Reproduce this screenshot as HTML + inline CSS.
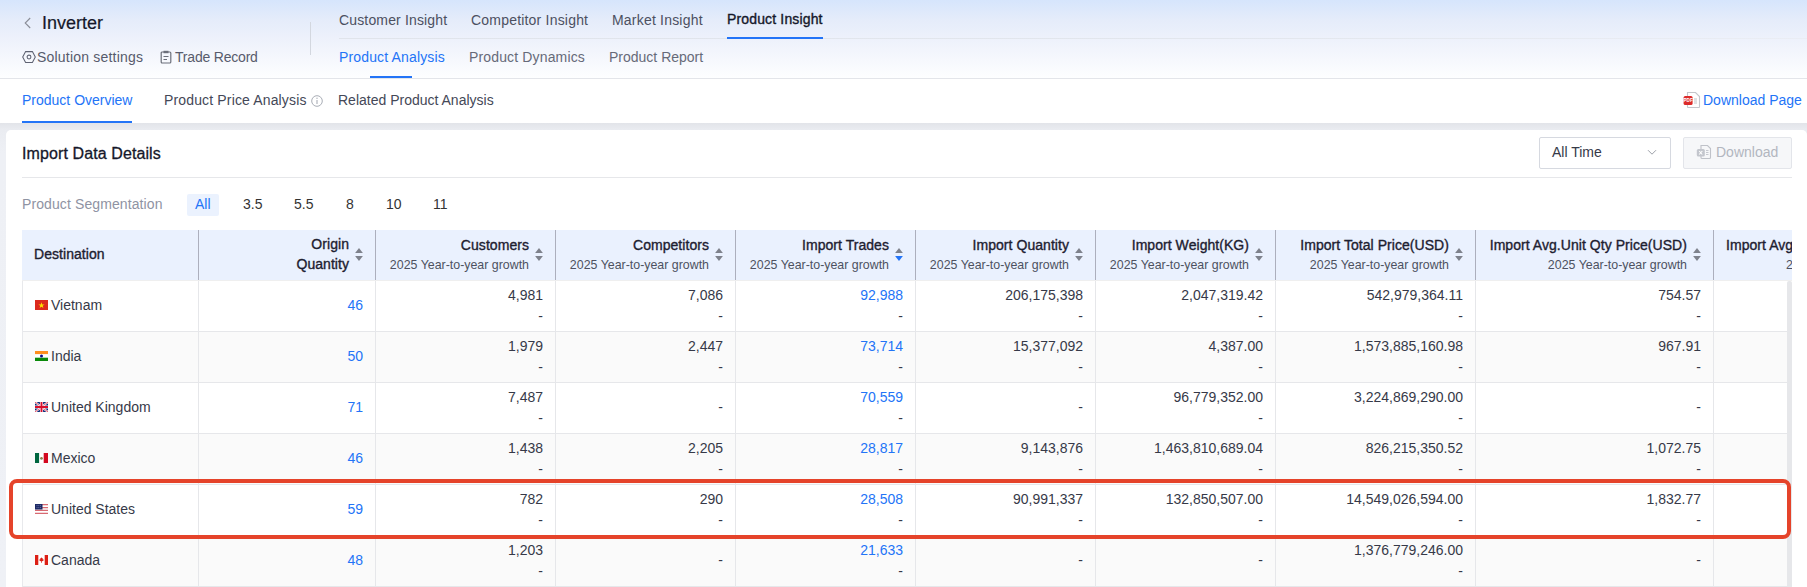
<!DOCTYPE html>
<html><head><meta charset="utf-8">
<style>
*{box-sizing:border-box;margin:0;padding:0}
html,body{width:1807px;height:587px;overflow:hidden;background:#fff;font-family:"Liberation Sans",sans-serif;font-size:14px;color:#333}
.a{position:absolute;white-space:nowrap;line-height:1}
#hdr{position:absolute;left:0;top:0;width:1807px;height:79px;background:linear-gradient(180deg,#d6e5fc 0px,#e5ecfa 20px,#edf1fb 38px,#f6f8fd 60px,#fdfeff 78px);border-bottom:1px solid #e3e5ea}
.blue{color:#2374f7 !important}
.gray{color:#575b6c}
.gn{color:#4c5061}
.gs{color:#666a79}
#tabs{position:absolute;left:0;top:79px;width:1807px;height:44px;background:#fff}
#band{position:absolute;left:0;top:123px;width:1807px;height:464px;background:linear-gradient(180deg,#e2e4e9 0,#eaecf1 7px,#eef0f5 30px,#eff1f6 100%)}
#card{position:absolute;left:6px;top:130px;width:1801px;height:470px;background:#fff;border-radius:5px}
.th{position:absolute;overflow:hidden;top:230px;height:50px;background:#eaf1fe;border-left:1px solid #acafbd}
.tt{position:absolute;right:26px;top:5px;font-weight:400;-webkit-text-stroke:0.35px #1d2030;color:#1d2030;font-size:14px;letter-spacing:0.05px;line-height:20px;text-align:right;white-space:nowrap}
.ts{position:absolute;right:26px;top:27px;color:#4d5161;font-size:12.4px;line-height:16px;white-space:nowrap}
.sort{position:absolute;right:12.5px;top:18px;width:8px;height:13px}
.row{position:absolute;left:22px;width:1765px;height:51px;border-bottom:1px solid #e6e7ea}
.cell{position:absolute;top:0;height:51px;border-left:1px solid #e6e7ea}
.v1{position:absolute;right:12px;top:5px;line-height:18px;color:#363948;font-size:14px}
.v2{position:absolute;right:12px;top:26px;line-height:18px;color:#363948;font-size:14px}
.vc{position:absolute;right:12px;top:15px;line-height:18px;font-size:14px;color:#363948}
</style></head>
<body>
<div id="hdr"></div>
<!-- header left -->
<svg class="a" style="left:23px;top:17px" width="10" height="12" viewBox="0 0 10 12"><path d="M7.2 1 L2.2 6 L7.2 11" fill="none" stroke="#8a8d97" stroke-width="1.1"/></svg>
<div class="a" style="left:42px;top:14px;font-size:18px;color:#15182a;-webkit-text-stroke:0.2px #15182a">Inverter</div>
<svg class="a" style="left:22px;top:51px" width="14" height="12" viewBox="0 0 14 12"><path d="M3.6 0.6 H10.4 L13.3 6 L10.4 11.4 H3.6 L0.7 6 Z" fill="none" stroke="#5e6272" stroke-width="1.05"/><circle cx="7" cy="6" r="1.9" fill="none" stroke="#5e6272" stroke-width="1.05"/></svg>
<div class="a gray" style="left:37px;top:50px;font-size:14px;letter-spacing:0.2px">Solution settings</div>
<svg class="a" style="left:160px;top:50px" width="12" height="14" viewBox="0 0 12 14"><rect x="1.2" y="2" width="9.6" height="11" rx="1" fill="none" stroke="#6b6f7a" stroke-width="1.2"/><rect x="3.5" y="0.8" width="5" height="2.4" fill="#6b6f7a"/><path d="M3.5 6.5 H8.5 M3.5 9.5 H7" stroke="#6b6f7a" stroke-width="1.2"/></svg>
<div class="a gray" style="left:175px;top:50px;font-size:14px;letter-spacing:-0.2px">Trade Record</div>
<div class="a" style="left:310px;top:22px;width:1px;height:33px;background:#d3d7df"></div>
<!-- top nav -->
<div class="a gn" style="left:339px;top:13px;letter-spacing:0.15px">Customer Insight</div>
<div class="a gn" style="left:471px;top:13px;letter-spacing:0.2px">Competitor Insight</div>
<div class="a gn" style="left:612px;top:13px;letter-spacing:0.2px">Market Insight</div>
<div class="a" style="left:727px;top:12px;color:#15182a;-webkit-text-stroke:0.35px #15182a;letter-spacing:0.15px">Product Insight</div>
<div class="a" style="left:339px;top:38px;width:1468px;height:1px;background:linear-gradient(90deg,#e0e4eb 0,#e2e6ed 60%,#eaedf4 100%)"></div>
<div class="a" style="left:727px;top:37px;width:96px;height:2px;background:#2374f7"></div>
<div class="a blue" style="left:339px;top:50px;letter-spacing:0.15px">Product Analysis</div>
<div class="a gs" style="left:469px;top:50px;letter-spacing:0.15px">Product Dynamics</div>
<div class="a gs" style="left:609px;top:50px">Product Report</div>
<div class="a" style="left:370px;top:76px;width:42px;height:2px;background:#2374f7"></div>

<!-- tabs -->
<div id="tabs"></div>
<div class="a blue" style="left:22px;top:93px">Product Overview</div>
<div class="a" style="left:22px;top:121px;width:110px;height:2px;background:#2374f7"></div>
<div class="a" style="left:164px;top:93px;color:#444857;letter-spacing:0.15px">Product Price Analysis</div>
<svg class="a" style="left:311px;top:95px" width="12" height="12" viewBox="0 0 12 12"><circle cx="6" cy="6" r="5.3" fill="none" stroke="#a9adb6" stroke-width="1"/><path d="M6 5 V9" stroke="#a9adb6" stroke-width="1.1"/><circle cx="6" cy="3.3" r="0.7" fill="#a9adb6"/></svg>
<div class="a" style="left:338px;top:93px;color:#444857">Related Product Analysis</div>
<svg class="a" style="left:1683px;top:91px" width="18" height="18" viewBox="0 0 18 18"><path d="M4.5 1.5 H12.5 L16.5 5.5 V16 Q16.5 16.5 16 16.5 H5 Q4.5 16.5 4.5 16 Z" fill="#fff" stroke="#c4c6cb" stroke-width="1.1"/><path d="M11 8 H14 M11 10 H14 M11 12 H14" stroke="#b9bcc2" stroke-width="0.9"/><rect x="0.6" y="5" width="9" height="9" rx="1.6" fill="#dc2b2b"/><text x="5.1" y="11.2" font-size="4.6" font-family="Liberation Sans" font-weight="700" fill="#fff" text-anchor="middle">PDF</text></svg>
<div class="a blue" style="left:1703px;top:93px">Download Page</div>

<div id="band"></div>
<div id="card"></div>

<div class="a" style="left:22px;top:146px;font-size:16px;color:#15182a;-webkit-text-stroke:0.3px #15182a;letter-spacing:0.1px">Import Data Details</div>
<div class="a" style="left:1539px;top:137px;width:132px;height:32px;border:1px solid #d6d9e0;border-radius:2px;background:#fff"></div>
<div class="a" style="left:1552px;top:145px;color:#363948">All Time</div>
<svg class="a" style="left:1647px;top:149px" width="10" height="7" viewBox="0 0 10 7"><path d="M1 1.2 L5 5.2 L9 1.2" fill="none" stroke="#9ca0a8" stroke-width="1"/></svg>
<div class="a" style="left:1683px;top:137px;width:109px;height:32px;border:1px solid #e3e5ea;border-radius:2px;background:#f6f7f9"></div>
<svg class="a" style="left:1696px;top:144px" width="16" height="16" viewBox="0 0 16 16"><path d="M5 1.5 H11.5 L14.5 4.5 V13.5 Q14.5 14.5 13.5 14.5 H6 Q5 14.5 5 13.5 Z" fill="#f6f7f9" stroke="#bfc2c9" stroke-width="1.1"/><path d="M10 6.5 H12.5 M10 8.5 H12.5 M10 10.5 H12.5" stroke="#bfc2c9" stroke-width="0.9"/><rect x="0.8" y="5" width="8" height="7.5" rx="1.5" fill="#c3c6cd"/><path d="M3.2 7 L6.3 10.5 M6.3 7 L3.2 10.5" stroke="#fff" stroke-width="1.1"/></svg>
<div class="a" style="left:1716px;top:145px;color:#b2b6bf">Download</div>
<div class="a" style="left:22px;top:177px;width:1770px;height:1px;background:#e6e7ea"></div>

<div class="a" style="left:22px;top:197px;color:#8f93a3;letter-spacing:0.1px">Product Segmentation</div>
<div class="a" style="left:187px;top:194px;width:32px;height:22px;background:#ebf2fe;border-radius:2px"></div>
<div class="a blue" style="left:195px;top:197px">All</div>
<div class="a" style="left:243px;top:197px;color:#333">3.5</div>
<div class="a" style="left:294px;top:197px;color:#333">5.5</div>
<div class="a" style="left:346px;top:197px;color:#333">8</div>
<div class="a" style="left:386px;top:197px;color:#333">10</div>
<div class="a" style="left:433px;top:197px;color:#333">11</div>

<!-- TABLE -->
<div class="th" style="left:22px;width:176px;border-left:none;"><div class="tt" style="left:12px;right:auto;top:14px;text-align:left">Destination</div></div>
<div class="th" style="left:198px;width:177px;"><div class="tt" style="top:4px;line-height:20px">Origin<br>Quantity</div><svg class="sort" viewBox="0 0 8 13"><path d="M4 0 L7.9 5.1 H0.1 Z" fill="#7e828c"/><path d="M4 13 L7.9 8 H0.1 Z" fill="#7e828c"/></svg></div>
<div class="th" style="left:375px;width:180px;"><div class="tt">Customers</div><div class="ts">2025 Year-to-year growth</div><svg class="sort" viewBox="0 0 8 13"><path d="M4 0 L7.9 5.1 H0.1 Z" fill="#7e828c"/><path d="M4 13 L7.9 8 H0.1 Z" fill="#7e828c"/></svg></div>
<div class="th" style="left:555px;width:180px;"><div class="tt">Competitors</div><div class="ts">2025 Year-to-year growth</div><svg class="sort" viewBox="0 0 8 13"><path d="M4 0 L7.9 5.1 H0.1 Z" fill="#7e828c"/><path d="M4 13 L7.9 8 H0.1 Z" fill="#7e828c"/></svg></div>
<div class="th" style="left:735px;width:180px;"><div class="tt">Import Trades</div><div class="ts">2025 Year-to-year growth</div><svg class="sort" viewBox="0 0 8 13"><path d="M4 0 L7.9 5.1 H0.1 Z" fill="#7e828c"/><path d="M4 13 L7.9 8 H0.1 Z" fill="#2374f7"/></svg></div>
<div class="th" style="left:915px;width:180px;"><div class="tt">Import Quantity</div><div class="ts">2025 Year-to-year growth</div><svg class="sort" viewBox="0 0 8 13"><path d="M4 0 L7.9 5.1 H0.1 Z" fill="#7e828c"/><path d="M4 13 L7.9 8 H0.1 Z" fill="#7e828c"/></svg></div>
<div class="th" style="left:1095px;width:180px;"><div class="tt">Import Weight(KG)</div><div class="ts">2025 Year-to-year growth</div><svg class="sort" viewBox="0 0 8 13"><path d="M4 0 L7.9 5.1 H0.1 Z" fill="#7e828c"/><path d="M4 13 L7.9 8 H0.1 Z" fill="#7e828c"/></svg></div>
<div class="th" style="left:1275px;width:200px;"><div class="tt">Import Total Price(USD)</div><div class="ts">2025 Year-to-year growth</div><svg class="sort" viewBox="0 0 8 13"><path d="M4 0 L7.9 5.1 H0.1 Z" fill="#7e828c"/><path d="M4 13 L7.9 8 H0.1 Z" fill="#7e828c"/></svg></div>
<div class="th" style="left:1475px;width:238px;"><div class="tt">Import Avg.Unit Qty Price(USD)</div><div class="ts">2025 Year-to-year growth</div><svg class="sort" viewBox="0 0 8 13"><path d="M4 0 L7.9 5.1 H0.1 Z" fill="#7e828c"/><path d="M4 13 L7.9 8 H0.1 Z" fill="#7e828c"/></svg></div>
<div class="th" style="left:1713px;width:187px;"><div class="tt" style="left:12px;right:auto">Import Avg.Unit Weight Price(USD)</div><div class="ts" style="left:72px;right:auto">2025 Year-to-year growth</div></div>
<div class="a" style="left:22px;top:280px;width:1770px;height:1px;background:#efefef"></div>
<div class="row" style="top:281px;background:#fff"><div class="a" style="left:0;top:0;width:1px;height:51px;background:#e8e9ec"></div>
<div class="cell" style="left:0px;width:176px;border-left:none;"><svg style="position:absolute;left:13px;top:19px" width="13" height="10" viewBox="0 0 13 10"><rect width="13" height="10" fill="#dc2a1e"/><path d="M6.5 2.2 L7.25 4.45 L9.6 4.45 L7.7 5.85 L8.4 8.1 L6.5 6.7 L4.6 8.1 L5.3 5.85 L3.4 4.45 L5.75 4.45 Z" fill="#fde000"/></svg><div class="a" style="left:29px;top:17px;color:#363948;font-size:14px">Vietnam</div></div>
<div class="cell" style="left:176px;width:177px;"><div class="vc blue">46</div></div>
<div class="cell" style="left:353px;width:180px;"><div class="v1">4,981</div><div class="v2">-</div></div>
<div class="cell" style="left:533px;width:180px;"><div class="v1">7,086</div><div class="v2">-</div></div>
<div class="cell" style="left:713px;width:180px;"><div class="v1 blue">92,988</div><div class="v2">-</div></div>
<div class="cell" style="left:893px;width:180px;"><div class="v1">206,175,398</div><div class="v2">-</div></div>
<div class="cell" style="left:1073px;width:180px;"><div class="v1">2,047,319.42</div><div class="v2">-</div></div>
<div class="cell" style="left:1253px;width:200px;"><div class="v1">542,979,364.11</div><div class="v2">-</div></div>
<div class="cell" style="left:1453px;width:238px;"><div class="v1">754.57</div><div class="v2">-</div></div>
<div class="cell" style="left:1691px;width:187px;"></div>
</div>
<div class="row" style="top:332px;background:#fafafa"><div class="a" style="left:0;top:0;width:1px;height:51px;background:#e8e9ec"></div>
<div class="cell" style="left:0px;width:176px;border-left:none;"><svg style="position:absolute;left:13px;top:19px" width="13" height="10" viewBox="0 0 13 10"><rect width="13" height="3.3" fill="#ff8f1f"/><rect y="3.3" width="13" height="3.4" fill="#fff"/><rect y="6.7" width="13" height="3.3" fill="#0a8a0a"/><circle cx="6.5" cy="5" r="1.5" fill="#0c0f8a"/></svg><div class="a" style="left:29px;top:17px;color:#363948;font-size:14px">India</div></div>
<div class="cell" style="left:176px;width:177px;"><div class="vc blue">50</div></div>
<div class="cell" style="left:353px;width:180px;"><div class="v1">1,979</div><div class="v2">-</div></div>
<div class="cell" style="left:533px;width:180px;"><div class="v1">2,447</div><div class="v2">-</div></div>
<div class="cell" style="left:713px;width:180px;"><div class="v1 blue">73,714</div><div class="v2">-</div></div>
<div class="cell" style="left:893px;width:180px;"><div class="v1">15,377,092</div><div class="v2">-</div></div>
<div class="cell" style="left:1073px;width:180px;"><div class="v1">4,387.00</div><div class="v2">-</div></div>
<div class="cell" style="left:1253px;width:200px;"><div class="v1">1,573,885,160.98</div><div class="v2">-</div></div>
<div class="cell" style="left:1453px;width:238px;"><div class="v1">967.91</div><div class="v2">-</div></div>
<div class="cell" style="left:1691px;width:187px;"></div>
</div>
<div class="row" style="top:383px;background:#fff"><div class="a" style="left:0;top:0;width:1px;height:51px;background:#e8e9ec"></div>
<div class="cell" style="left:0px;width:176px;border-left:none;"><svg style="position:absolute;left:13px;top:19px" width="13" height="10" viewBox="0 0 13 10"><rect width="13" height="10" fill="#0b2a78"/><path d="M0 0 L13 10 M13 0 L0 10" stroke="#fff" stroke-width="2"/><path d="M0 0 L13 10 M13 0 L0 10" stroke="#e0203a" stroke-width="0.8"/><path d="M6.5 0 V10 M0 5 H13" stroke="#fff" stroke-width="3.2"/><path d="M6.5 0 V10 M0 5 H13" stroke="#d80f2c" stroke-width="1.9"/></svg><div class="a" style="left:29px;top:17px;color:#363948;font-size:14px">United Kingdom</div></div>
<div class="cell" style="left:176px;width:177px;"><div class="vc blue">71</div></div>
<div class="cell" style="left:353px;width:180px;"><div class="v1">7,487</div><div class="v2">-</div></div>
<div class="cell" style="left:533px;width:180px;"><div class="vc">-</div></div>
<div class="cell" style="left:713px;width:180px;"><div class="v1 blue">70,559</div><div class="v2">-</div></div>
<div class="cell" style="left:893px;width:180px;"><div class="vc">-</div></div>
<div class="cell" style="left:1073px;width:180px;"><div class="v1">96,779,352.00</div><div class="v2">-</div></div>
<div class="cell" style="left:1253px;width:200px;"><div class="v1">3,224,869,290.00</div><div class="v2">-</div></div>
<div class="cell" style="left:1453px;width:238px;"><div class="vc">-</div></div>
<div class="cell" style="left:1691px;width:187px;"></div>
</div>
<div class="row" style="top:434px;background:#fafafa"><div class="a" style="left:0;top:0;width:1px;height:51px;background:#e8e9ec"></div>
<div class="cell" style="left:0px;width:176px;border-left:none;"><svg style="position:absolute;left:13px;top:19px" width="13" height="10" viewBox="0 0 13 10"><rect width="4.3" height="10" fill="#00663f"/><rect x="4.3" width="4.4" height="10" fill="#fff"/><rect x="8.7" width="4.3" height="10" fill="#d3081f"/><circle cx="6.5" cy="5.2" r="1.3" fill="#9a7a44"/><path d="M5.3 5.8 Q6.5 6.9 7.7 5.8" stroke="#5a9a70" stroke-width="0.6" fill="none"/></svg><div class="a" style="left:29px;top:17px;color:#363948;font-size:14px">Mexico</div></div>
<div class="cell" style="left:176px;width:177px;"><div class="vc blue">46</div></div>
<div class="cell" style="left:353px;width:180px;"><div class="v1">1,438</div><div class="v2">-</div></div>
<div class="cell" style="left:533px;width:180px;"><div class="v1">2,205</div><div class="v2">-</div></div>
<div class="cell" style="left:713px;width:180px;"><div class="v1 blue">28,817</div><div class="v2">-</div></div>
<div class="cell" style="left:893px;width:180px;"><div class="v1">9,143,876</div><div class="v2">-</div></div>
<div class="cell" style="left:1073px;width:180px;"><div class="v1">1,463,810,689.04</div><div class="v2">-</div></div>
<div class="cell" style="left:1253px;width:200px;"><div class="v1">826,215,350.52</div><div class="v2">-</div></div>
<div class="cell" style="left:1453px;width:238px;"><div class="v1">1,072.75</div><div class="v2">-</div></div>
<div class="cell" style="left:1691px;width:187px;"></div>
</div>
<div class="row" style="top:485px;background:#fff"><div class="a" style="left:0;top:0;width:1px;height:51px;background:#e8e9ec"></div>
<div class="cell" style="left:0px;width:176px;border-left:none;"><svg style="position:absolute;left:13px;top:19px" width="13" height="10" viewBox="0 0 13 10"><rect width="13" height="10" fill="#fff"/><path d="M0 0.6 H13 M0 3.5 H13 M0 6.4 H13 M0 9.3 H13" stroke="#d86a72" stroke-width="1.25"/><rect width="7.5" height="5.5" fill="#1d2a66"/><path d="M1.5 1.6 H6 M1.5 3.6 H6" stroke="#6d78a8" stroke-width="0.9" stroke-dasharray="1 0.8"/></svg><div class="a" style="left:29px;top:17px;color:#363948;font-size:14px">United States</div></div>
<div class="cell" style="left:176px;width:177px;"><div class="vc blue">59</div></div>
<div class="cell" style="left:353px;width:180px;"><div class="v1">782</div><div class="v2">-</div></div>
<div class="cell" style="left:533px;width:180px;"><div class="v1">290</div><div class="v2">-</div></div>
<div class="cell" style="left:713px;width:180px;"><div class="v1 blue">28,508</div><div class="v2">-</div></div>
<div class="cell" style="left:893px;width:180px;"><div class="v1">90,991,337</div><div class="v2">-</div></div>
<div class="cell" style="left:1073px;width:180px;"><div class="v1">132,850,507.00</div><div class="v2">-</div></div>
<div class="cell" style="left:1253px;width:200px;"><div class="v1">14,549,026,594.00</div><div class="v2">-</div></div>
<div class="cell" style="left:1453px;width:238px;"><div class="v1">1,832.77</div><div class="v2">-</div></div>
<div class="cell" style="left:1691px;width:187px;"></div>
</div>
<div class="row" style="top:536px;background:#fafafa"><div class="a" style="left:0;top:0;width:1px;height:51px;background:#e8e9ec"></div>
<div class="cell" style="left:0px;width:176px;border-left:none;"><svg style="position:absolute;left:13px;top:19px" width="13" height="10" viewBox="0 0 13 10"><rect width="13" height="10" fill="#fff"/><rect width="3.3" height="10" fill="#dc1f14"/><rect x="9.7" width="3.3" height="10" fill="#dc1f14"/><path d="M6.5 2.2 L7.2 3.6 L8 3.3 L7.8 4.8 L9 4.4 L8.5 5.6 L6.8 6.6 V8 H6.2 V6.6 L4.5 5.6 L4 4.4 L5.2 4.8 L5 3.3 L5.8 3.6 Z" fill="#dc1f14"/></svg><div class="a" style="left:29px;top:17px;color:#363948;font-size:14px">Canada</div></div>
<div class="cell" style="left:176px;width:177px;"><div class="vc blue">48</div></div>
<div class="cell" style="left:353px;width:180px;"><div class="v1">1,203</div><div class="v2">-</div></div>
<div class="cell" style="left:533px;width:180px;"><div class="vc">-</div></div>
<div class="cell" style="left:713px;width:180px;"><div class="v1 blue">21,633</div><div class="v2">-</div></div>
<div class="cell" style="left:893px;width:180px;"><div class="vc">-</div></div>
<div class="cell" style="left:1073px;width:180px;"><div class="vc">-</div></div>
<div class="cell" style="left:1253px;width:200px;"><div class="v1">1,376,779,246.00</div><div class="v2">-</div></div>
<div class="cell" style="left:1453px;width:238px;"><div class="vc">-</div></div>
<div class="cell" style="left:1691px;width:187px;"></div>
</div>
<div class="a" style="left:1787px;top:281px;width:5px;height:310px;background:#e6e7ea;border-radius:2px"></div>
<div class="a" style="left:1792px;top:230px;width:20px;height:357px;background:#fff"></div>
<div class="a" style="left:9px;top:479px;width:1782px;height:60px;border:4px solid #e5432a;border-radius:8px"></div>
</body></html>
